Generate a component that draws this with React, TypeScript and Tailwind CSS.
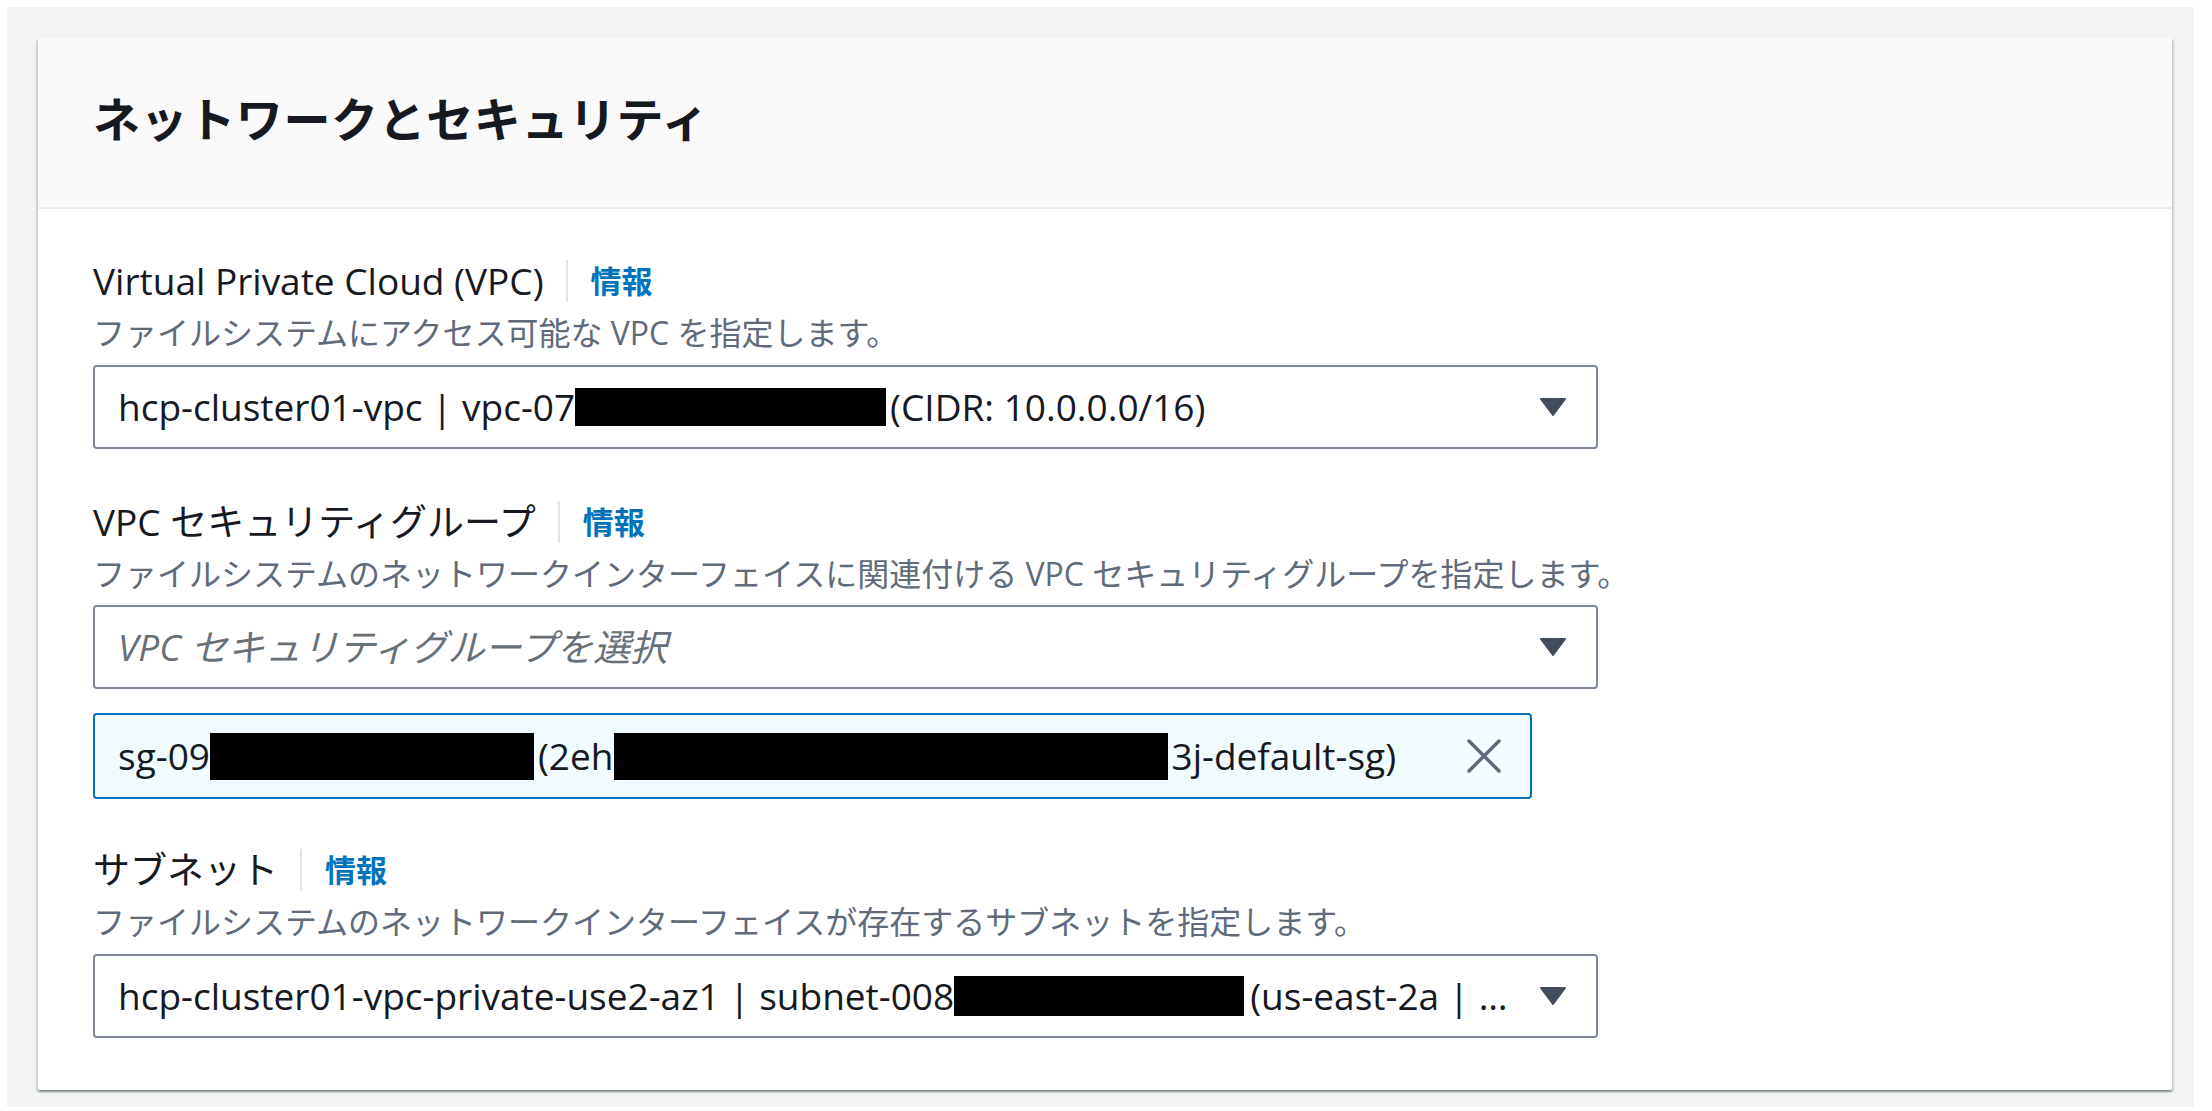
import React from "react";

const FONT = { fontFamily: '"Open Sans", "Noto Sans CJK JP", sans-serif' };

function Caret() {
  return (
    <svg width="26" height="18" viewBox="0 0 26 18" className="shrink-0">
      <polygon points="1,1 25,1 13,17" fill="#414d5c" stroke="#414d5c" strokeWidth="2" strokeLinejoin="round" />
    </svg>
  );
}

function Label({ children }: { children: React.ReactNode }) {
  return (
    <div className="flex items-center h-[44px]">
      <span className="text-[37px] leading-[44px] text-[#16191f]">{children}</span>
      <span className="w-[2px] h-[42px] bg-[#e1e4e8] ml-[22px] mr-[23px]" />
      <span className="text-[31px] leading-[44px] font-bold text-[#0073bb]">情報</span>
    </div>
  );
}

function Desc({ children }: { children: React.ReactNode }) {
  return <div className="mt-[10px] text-[32px] leading-[40px] text-[#5f6b7a] whitespace-nowrap">{children}</div>;
}

function Redact({ w, h }: { w: number; h: number }) {
  return <span className="inline-block bg-black shrink-0" style={{ width: w, height: h }} />;
}

export default function App() {
  return (
    <div className="w-[2212px] h-[1111px] bg-white pt-[7px] pl-[7px] pr-[18px] pb-[4px]" style={FONT}>
      <div className="w-full h-full bg-[#f2f3f3] pt-[31px] pl-[31px] pr-[22px] pb-[17px]">
        <div className="bg-white h-full rounded-[2px] shadow-[0_2px_2px_0_rgba(0,28,36,0.3),2px_2px_2px_0_rgba(0,28,36,0.12),-2px_2px_2px_0_rgba(0,28,36,0.12)] flex flex-col">
          <div className="h-[171px] bg-[#fafafa] border-b-2 border-[#eaeded] flex items-center pl-[55px] pb-[10px]">
            <h2 className="text-[47px] font-bold text-[#16191f] tracking-[0.6px]" style={{ fontFamily: '"Noto Sans CJK JP", sans-serif' }}>
              ネットワークとセキュリティ
            </h2>
          </div>
          <div className="pl-[55px] pt-[50px]">
            <Label>Virtual Private Cloud (VPC)</Label>
            <Desc>ファイルシステムにアクセス可能な VPC を指定します。</Desc>
            <div className="mt-[12px] w-[1505px] h-[84px] border-2 border-[#7d8998] rounded-[4px] flex items-center pl-[23px] pr-[30px]">
              <div className="flex-1 flex items-center text-[37px] text-[#16191f] whitespace-nowrap">
                <span>hcp-cluster01-vpc | vpc-07</span>
                <Redact w={311} h={38} />
                <span className="ml-[4px]">(CIDR: 10.0.0.0/16)</span>
              </div>
              <Caret />
            </div>

            <div className="mt-[51px]">
              <Label>VPC セキュリティグループ</Label>
            </div>
            <Desc>ファイルシステムのネットワークインターフェイスに関連付ける VPC セキュリティグループを指定します。</Desc>
            <div className="mt-[11px] w-[1505px] h-[84px] border-2 border-[#7d8998] rounded-[4px] flex items-center pl-[23px] pr-[30px]">
              <div className="flex-1 text-[37px] italic text-[#687078] whitespace-nowrap">VPC セキュリティグループを選択</div>
              <Caret />
            </div>

            <div className="mt-[24px] w-[1439px] h-[86px] border-2 border-[#0073bb] bg-[#f1faff] rounded-[4px] flex items-center pl-[23px] pr-[28px]">
              <div className="flex-1 flex items-center text-[37px] text-[#16191f] whitespace-nowrap">
                <span>sg-09</span>
                <Redact w={324} h={47} />
                <span className="ml-[4px]">(2eh</span>
                <Redact w={554} h={47} />
                <span className="ml-[4px]">3j-default-sg)</span>
              </div>
              <svg width="36" height="36" viewBox="0 0 36 36" className="shrink-0">
                <path d="M3 3 L33 33 M33 3 L3 33" stroke="#5f6b7a" strokeWidth="3.5" strokeLinecap="round" />
              </svg>
            </div>

            <div className="mt-[49px]">
              <Label>サブネット</Label>
            </div>
            <Desc>ファイルシステムのネットワークインターフェイスが存在するサブネットを指定します。</Desc>
            <div className="mt-[12px] w-[1505px] h-[84px] border-2 border-[#7d8998] rounded-[4px] flex items-center pl-[23px] pr-[30px]">
              <div className="flex-1 flex items-center text-[37px] text-[#16191f] whitespace-nowrap overflow-hidden">
                <span>hcp-cluster01-vpc-private-use2-az1 | subnet-008</span>
                <Redact w={290} h={40} />
                <span className="ml-[6px]">(us-east-2a | …</span>
              </div>
              <Caret />
            </div>
          </div>
        </div>
      </div>
    </div>
  );
}
